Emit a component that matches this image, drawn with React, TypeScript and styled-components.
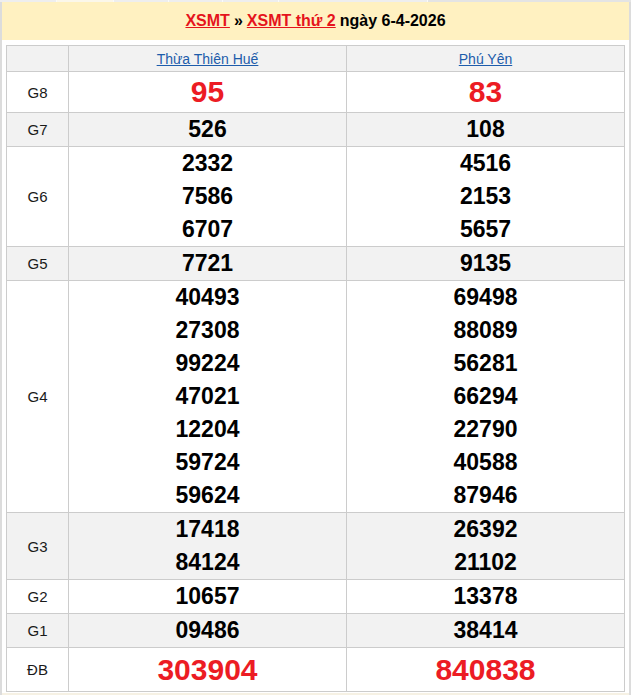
import React from "react";
import styled, { createGlobalStyle } from "styled-components";

const GlobalStyle = createGlobalStyle`
  html, body {
    margin: 0;
    padding: 0;
    background: #ffffff;
  }
  body {
    font-family: "Liberation Sans", Arial, sans-serif;
    color: #000;
  }
`;

const Page = styled.div`
  width: 631px;
`;

const TabStrip = styled.div`
  display: flex;
  height: 2px;
  background: #e4e4e4;
`;

const Tab = styled.div<{ $w: number; $active?: boolean }>`
  width: ${(p) => p.$w}px;
  height: 2px;
  box-sizing: border-box;
  border-right: 1px solid #fafafa;
  background: ${(p) => (p.$active ? "#fbf7ea" : "#eeeeee")};
`;

const Frame = styled.div`
  box-sizing: border-box;
  width: 631px;
  border-left: 2px solid #dcdcdc;
  border-right: 2px solid #dcdcdc;
  padding-bottom: 1px;
`;

const TitleBar = styled.div`
  height: 38px;
  background: #fff1c1;
  display: flex;
  align-items: center;
  justify-content: center;
  gap: 4px;
  font-size: 16px;
  font-weight: bold;
`;

const TitleLink = styled.a`
  color: #e5141c;
  text-decoration: underline;
`;

const TitleText = styled.span`
  color: #000;
`;

const TableWrap = styled.div`
  padding: 5px 4px 0 4px;
`;

const Table = styled.div`
  display: flex;
  flex-direction: column;
  border-left: 1px solid #cccccc;
  border-top: 1px solid #cccccc;
`;

const Row = styled.div<{ $shaded?: boolean }>`
  display: grid;
  grid-template-columns: 62px 278px 278px;
  background: ${(p) => (p.$shaded ? "#f2f2f2" : "#ffffff")};
`;

const Cell = styled.div`
  box-sizing: border-box;
  border-right: 1px solid #cccccc;
  border-bottom: 1px solid #cccccc;
  display: flex;
  flex-direction: column;
  align-items: center;
  justify-content: center;
`;

const HeadCell = styled(Cell)`
  height: 26px;
`;

const HeadLink = styled.a`
  color: #1d5cab;
  text-decoration: underline;
  font-size: 14px;
`;

const LabelCell = styled(Cell)`
  font-size: 15px;
  color: #1a1a1a;
`;

const NumCell = styled(Cell)``;

const Num = styled.div<{ $big?: boolean; $h: number }>`
  height: ${(p) => p.$h}px;
  line-height: ${(p) => p.$h}px;
  font-weight: bold;
  font-size: ${(p) => (p.$big ? "30px" : "23px")};
  color: ${(p) => (p.$big ? "#ec1c24" : "#000")};
`;

const Footer = styled.div`
  height: 3px;
  margin-top: 1px;
  background: #f6f1e4;
`;

type Prize = {
  label: string;
  a: string[];
  b: string[];
  big?: boolean;
  h?: number;
};

const prizes: Prize[] = [
  { label: "G8", a: ["95"], b: ["83"], big: true, h: 40 },
  { label: "G7", a: ["526"], b: ["108"] },
  { label: "G6", a: ["2332", "7586", "6707"], b: ["4516", "2153", "5657"] },
  { label: "G5", a: ["7721"], b: ["9135"] },
  {
    label: "G4",
    a: ["40493", "27308", "99224", "47021", "12204", "59724", "59624"],
    b: ["69498", "88089", "56281", "66294", "22790", "40588", "87946"],
  },
  { label: "G3", a: ["17418", "84124"], b: ["26392", "21102"] },
  { label: "G2", a: ["10657"], b: ["13378"] },
  { label: "G1", a: ["09486"], b: ["38414"] },
  { label: "ĐB", a: ["303904"], b: ["840838"], big: true, h: 43 },
];

const tabs = [57, 57, 55, 54, 56, 149];

export default function App() {
  return (
    <Page>
      <GlobalStyle />
      <TabStrip>
        {tabs.map((w, i) => (
          <Tab key={i} $w={w} $active={i === 1} />
        ))}
      </TabStrip>
      <Frame>
        <TitleBar>
          <TitleLink href="#">XSMT</TitleLink>
          <TitleText>»</TitleText>
          <TitleLink href="#">XSMT thứ 2</TitleLink>
          <TitleText>ngày 6-4-2026</TitleText>
        </TitleBar>
        <TableWrap>
          <Table>
            <Row $shaded>
              <HeadCell />
              <HeadCell>
                <HeadLink href="#">Thừa Thiên Huế</HeadLink>
              </HeadCell>
              <HeadCell>
                <HeadLink href="#">Phú Yên</HeadLink>
              </HeadCell>
            </Row>
            {prizes.map((p, i) => {
              const h = p.h ?? 33;
              return (
                <Row key={p.label} $shaded={i % 2 === 1}>
                  <LabelCell>{p.label}</LabelCell>
                  <NumCell>
                    {p.a.map((n, j) => (
                      <Num key={j} $big={p.big} $h={h}>
                        {n}
                      </Num>
                    ))}
                  </NumCell>
                  <NumCell>
                    {p.b.map((n, j) => (
                      <Num key={j} $big={p.big} $h={h}>
                        {n}
                      </Num>
                    ))}
                  </NumCell>
                </Row>
              );
            })}
          </Table>
        </TableWrap>
        <Footer />
      </Frame>
    </Page>
  );
}
